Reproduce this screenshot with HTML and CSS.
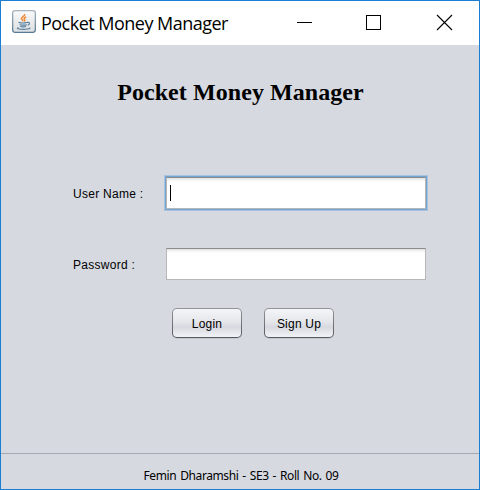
FILE: index.html
```html
<!DOCTYPE html>
<html lang="en">
<head>
<meta charset="utf-8">
<title>Pocket Money Manager</title>
<link rel="stylesheet" href="styles.css">
</head>
<body>
<div class="window">
  <header class="titlebar">
    <svg class="app-icon" width="24" height="24" viewBox="0 0 24 24" fill="none">
      <defs><linearGradient id="tile" x1="0" y1="0" x2="0" y2="1"><stop offset="0" stop-color="#fafafa"/><stop offset="1" stop-color="#dcdedf"/></linearGradient><linearGradient id="edge" x1="0" y1="0" x2="0" y2="1"><stop offset="0" stop-color="#a5b4bf"/><stop offset="1" stop-color="#587b95"/></linearGradient></defs>
      <rect x=".65" y=".65" width="22.7" height="21.7" rx="2.5" fill="url(#tile)" stroke="url(#edge)" stroke-width="1.3"/>
      <path d="M12.7 4c.8 2.2-3.6 3-3.2 4.700.2 1 1.300 1.600 1.700 2.500M14.200 7c-2.200.9-2.600 1.800-1.600 2.700.5.600.2 1.200-.3 1.600" stroke="#ed8a35" stroke-width="1.5"/>
      <path d="M6.500 12.200c2 .9 6.500.8 9 0M7.600 14.400c.5 1 5.500 1 7.200.3M8.300 16.300c.8.800 4.200.8 5.700.2M15.400 12.400c2.500-.7 2.900 2 .3 2.800M6.500 17.600c-3.500 1.300 3 1.900 6.700 1.700 3-.1 5-.7 4.500-1.700" stroke="#547d9e" stroke-width="1.150"/>
    </svg>
    <span class="caption">Pocket Money Manager</span>
    <svg class="controls" width="160" height="17" viewBox="0 0 160 17" fill="none" stroke="#000">
      <path d="M0 8.500h15M69.500 1.500h14v14h-14z" shape-rendering="crispEdges"/>
      <path d="M140 1l15 15M155 1l-15 15" stroke-width="1.100"/>
    </svg>
  </header>
  <main class="content">
    <h1 class="heading">Pocket Money Manager</h1>
    <form class="login">
      <div class="row"><label class="label user" for="user">User Name :</label><div class="field focused" id="user"><i class="caret"></i></div></div>
      <div class="row"><label class="label pass" for="pass">Password :</label><div class="field" id="pass"></div></div>
      <div class="actions"><button class="button" type="button"><span>Login</span></button><button class="button" type="button"><span>Sign Up</span></button></div>
    </form>
  </main>
  <footer class="footer"><span>Femin Dharamshi - SE3 - Roll No. 09</span></footer>
</div>
</body>
</html>
```
FILE: styles.css
```css
* { box-sizing: border-box; }
body { margin: 0; color: #000; }
.window {
  width: 480px;
  height: 490px;
  border: 1px solid #1a7fd2;
  background: #d6d9e0;
  display: flex;
  flex-direction: column;
  overflow: hidden;
}
.titlebar {
  height: 44px;
  flex: none;
  background: #fff;
  display: flex;
  align-items: flex-start;
  padding: 9px 22px 0 11px;
}
.app-icon { flex: none; }
.caption {
  margin-left: 5px;
  width: 190px;
  font: 18px/26px "Open Sans", sans-serif;
  letter-spacing: -0.52px;
  white-space: nowrap;
}
.controls { margin: 4px 0 0 auto; flex: none; }
.content { flex: 1; }
.heading {
  margin: 33px 0 0;
  text-align: center;
  font: bold 24px/28px "Liberation Serif", serif;
  letter-spacing: 0.07px;
  padding-left: 1px;
  white-space: nowrap;
}
.login { padding: 71px 0 0 72px; }
.row {
  display: flex;
  height: 32px;
  margin-bottom: 39px;
}
.label {
  width: 93px;
  font: 12px/34px "Liberation Sans", sans-serif;
  white-space: nowrap;
}
.user { letter-spacing: 0.28px; }
.pass { letter-spacing: 0.28px; }
.field {
  width: 260px;
  height: 32px;
  background: linear-gradient(#dedede, #f4f4f4 2px, #fff 4px);
  border: 1px solid #b5b6ba;
  border-top-color: #8b8c90;
  padding: 7px 0 0 3px;
}
.focused { box-shadow: 0 0 0 1px #73a4d1, 0 0 0 2px #a9c3df; }
.caret { display: block; width: 1px; height: 16px; background: #000; }
.actions {
  display: flex;
  gap: 22px;
  margin: -11px 0 0 99px;
}
.button {
  width: 70px;
  height: 30px;
  padding: 1px 0 0;
  border: 1px solid transparent;
  border-radius: 5px;
  background:
    linear-gradient(#f4f5f7, #e5e7eb 45%, #d6d9df 65%, #f1f3f7) padding-box,
    linear-gradient(#92959b, #55585d) border-box;
  box-shadow: 0 1px 0 #c5c8ce;
  color: #000;
  font: 12px/28px "Liberation Sans", sans-serif;
  letter-spacing: 0.22px;
}
.footer {
  height: 36px;
  flex: none;
  border-top: 1px solid #a6a9b2;
  padding-top: 13px;
  text-align: center;
  font: 12px/18px "Noto Sans", sans-serif;
  letter-spacing: -0.4px;
  word-spacing: 1.2px;
  padding-left: 2px;
  white-space: nowrap;
}
```
